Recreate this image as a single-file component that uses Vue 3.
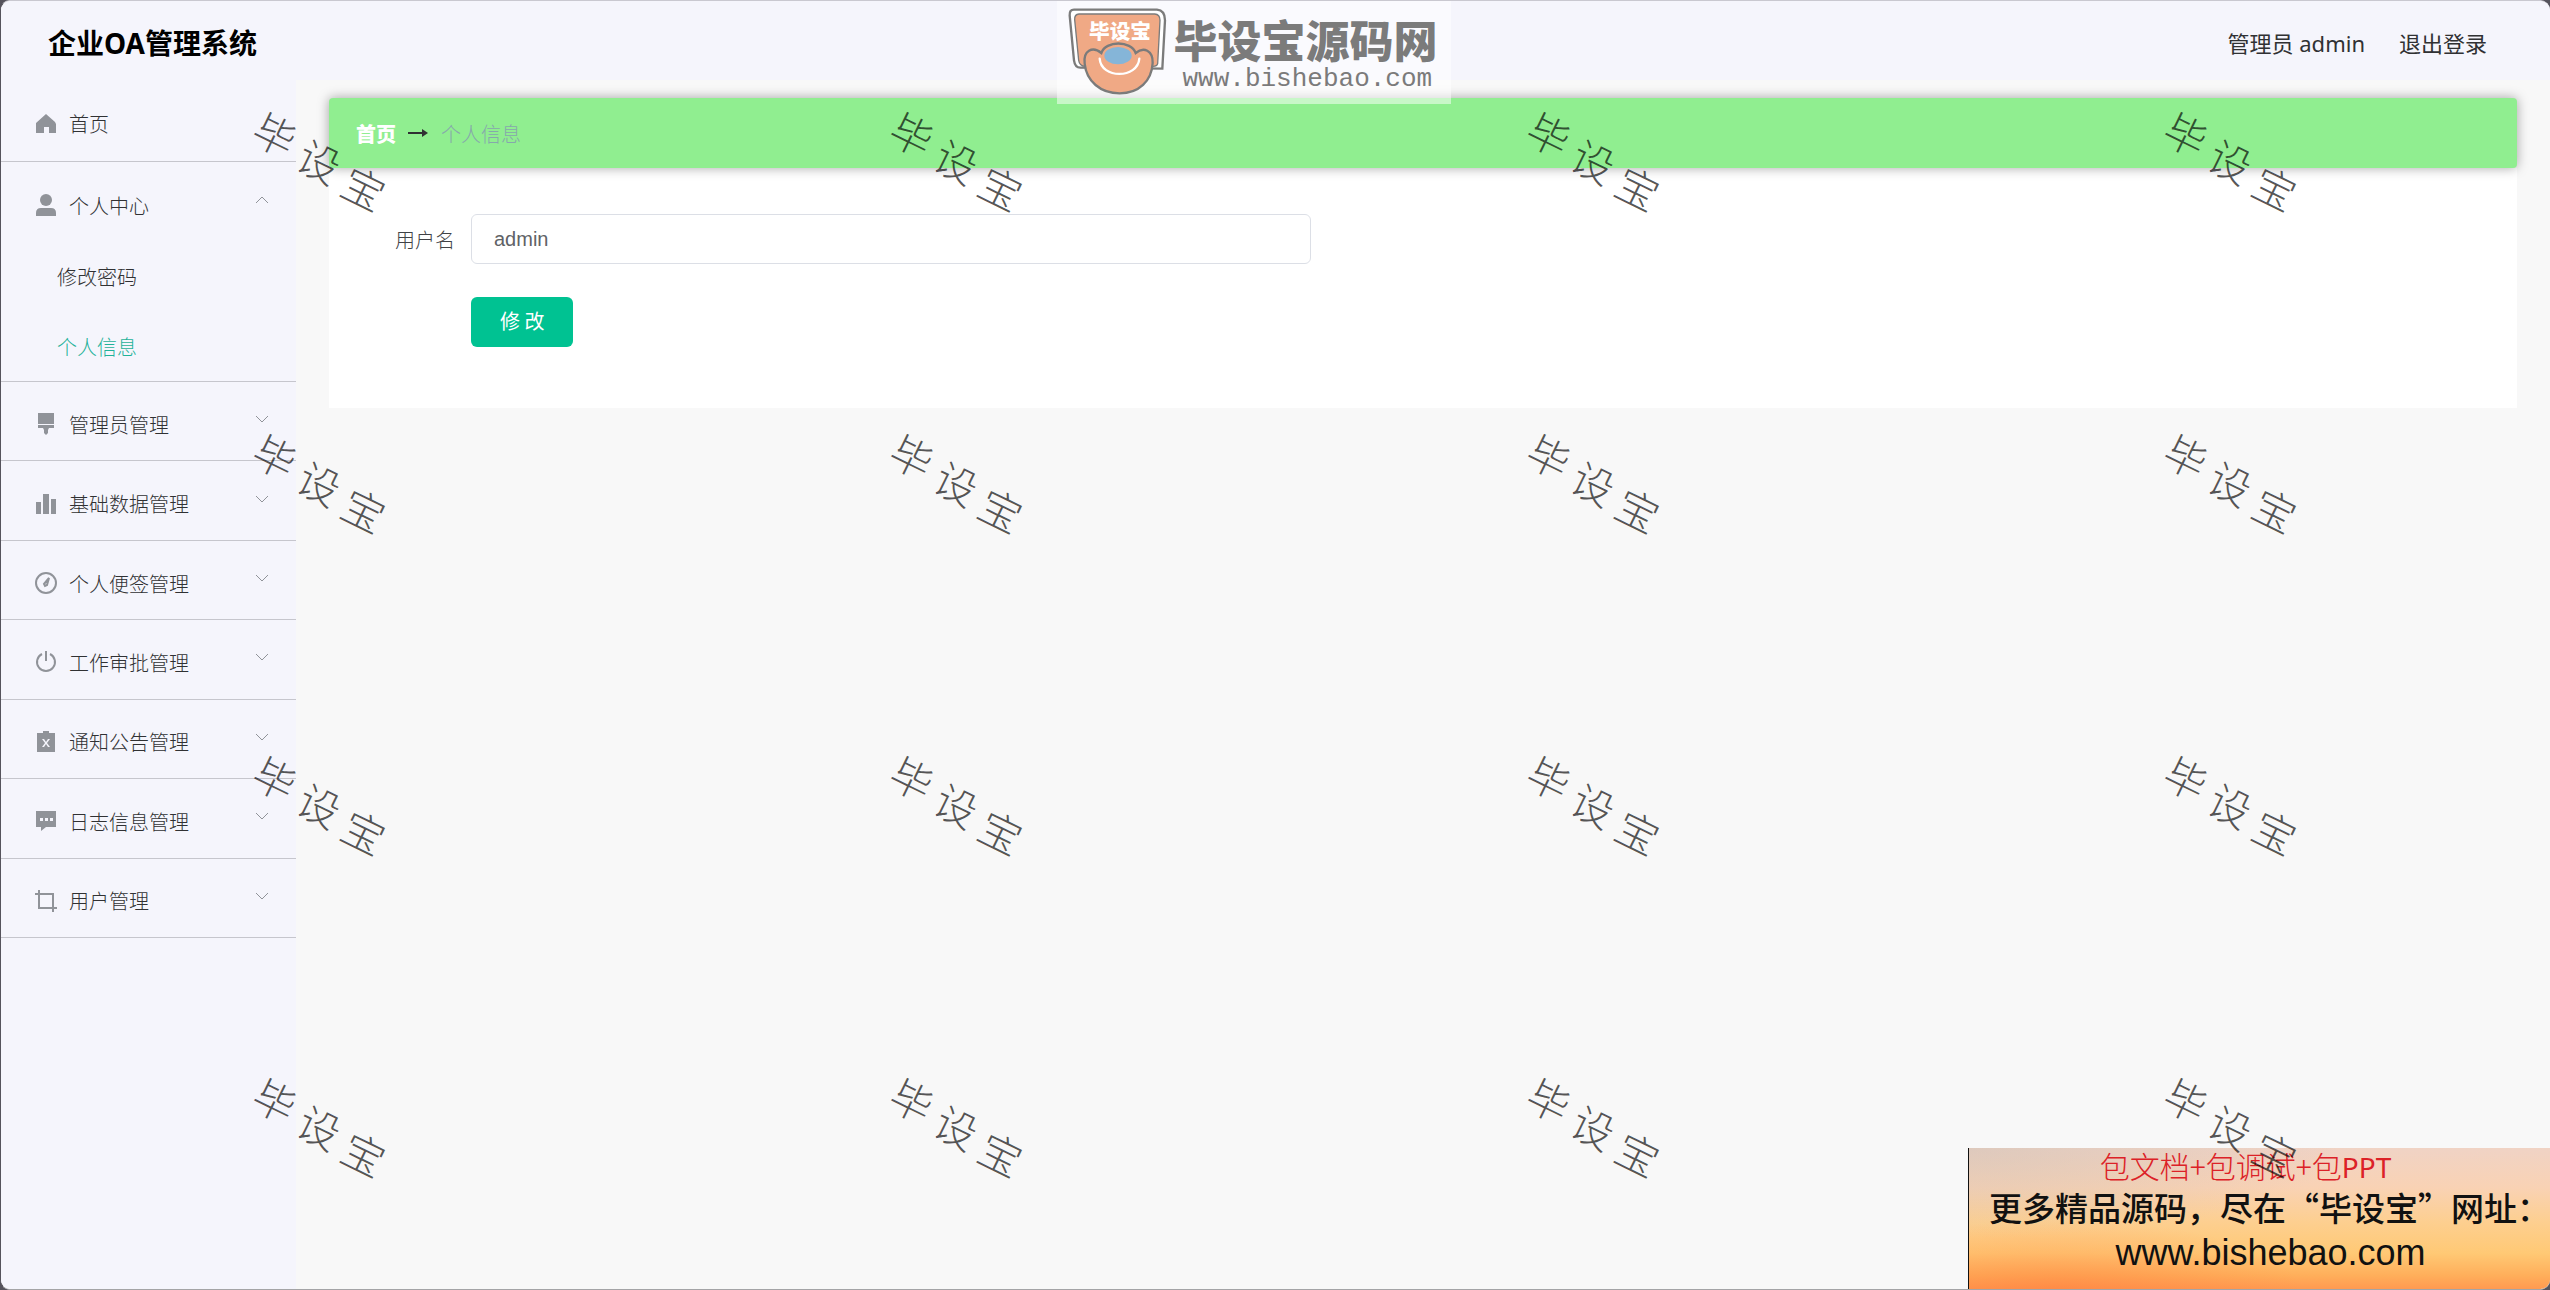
<template>
  <div class="app-shell">
    <header class="top-bar">
      <h1 class="brand">企业OA管理系统</h1>
      <div class="account">
        <span>管理员 admin</span>
        <a href="#logout">退出登录</a>
      </div>
    </header>

    <div class="body">
      <nav class="sidebar">
        <a class="menu-row home" href="#home">
          <svg class="icon" viewBox="0 0 22 22">
            <path d="M11 1 L20 9 L21 11 V20 H14 V14 H9 V20 H1 V10 Z" />
          </svg>
          <span>首页</span>
        </a>

        <div class="group opened">
          <button type="button" class="menu-row" @click="centerOpen = !centerOpen">
            <svg class="icon" viewBox="0 0 22 22">
              <circle cx="11" cy="6" r="6" />
              <path d="M1 22 V19 Q1 14 6 14 H16 Q21 14 21 19 V22 Z" />
            </svg>
            <span>个人中心</span>
            <svg class="arrow" viewBox="0 0 12 8">
              <path :d="centerOpen ? 'M0 7 L6 1 L12 7' : 'M0 1 L6 7 L12 1'" />
            </svg>
          </button>
          <template v-if="centerOpen">
            <a class="sub-row" href="#password">修改密码</a>
            <a class="sub-row active" href="#info">个人信息</a>
          </template>
        </div>

        <div class="groups">
          <button v-for="item in menus" :key="item.name" type="button" class="menu-row">
            <svg class="icon" :class="{ line: item.line }" viewBox="0 0 22 22">
              <path :d="item.path" fill-rule="evenodd" />
            </svg>
            <span>{{ item.name }}</span>
            <svg class="arrow" viewBox="0 0 12 8">
              <path d="M0 1 L6 7 L12 1" />
            </svg>
          </button>
        </div>
      </nav>

      <main class="content">
        <div class="breadcrumb">
          <a href="#home">首页</a>
          <svg class="crumb-arrow" viewBox="0 0 20 10">
            <path d="M0 5 H17" />
            <path class="head" d="M14 1 L20 5 L14 9 Z" />
          </svg>
          <span>个人信息</span>
        </div>
        <form class="card" @submit.prevent>
          <div class="form-item">
            <label for="username">用户名</label>
            <input id="username" v-model="username" type="text" />
          </div>
          <div class="form-item">
            <button type="submit" class="submit">修 改</button>
          </div>
        </form>
      </main>
    </div>

    <div class="watermarks">
      <div v-for="n in 16" :key="n" class="mark">
        <p><span>毕</span><span>设</span><span>宝</span></p>
      </div>
    </div>

    <div class="logo">
      <svg class="mascot" viewBox="80 20 300 270">
        <path class="outer" d="M101 28 H350 Q374 30 374 60 L366 205 L120 202 Q104 202 101 180 L88 45 Q87 28 101 28 Z" />
        <path class="face" d="M116 41 H343 Q359 42 359 60 L352 190 Q350 198 338 198 L135 198 Q118 198 115 180 L103 58 Q102 42 116 41 Z" />
        <path class="body-shape" d="M183 158 C196 120 272 120 286 158 C310 138 338 150 337 188 C334 242 296 279 238 279 C180 279 138 242 133 190 C128 152 156 136 183 158 Z" />
        <ellipse cx="233" cy="166" rx="41" ry="26" fill="#85b5d8" />
        <path class="smile" d="M178 175 C182 236 292 236 297 175" />
        <text x="146" y="115">毕设宝</text>
      </svg>
      <div class="logo-text">
        <strong>毕设宝源码网</strong>
        <span>www.bishebao.com</span>
      </div>
    </div>

    <aside class="promo">
      <p class="promo-red">包文档+包调试+包<b>PPT</b></p>
      <p class="promo-more">更多精品源码，尽在“毕设宝”网址：</p>
      <p class="promo-url">www.bishebao.com</p>
    </aside>
  </div>
</template>

<script setup>
import { ref } from "vue";

const username = ref("admin");
const centerOpen = ref(true);

const menus = [
  {
    name: "管理员管理",
    path: "M3 0 H19 V11 H3 Z M3 12 H19 V15 H14 L13 17 V20 L11 22 L9 20 V17 L8 15 H3 Z",
  },
  {
    name: "基础数据管理",
    path: "M1 9 H6 V21 H1 Z M8 1 H14 V21 H8 Z M16 6 H21 V21 H16 Z",
  },
  {
    name: "个人便签管理",
    line: true,
    path: "M11 1 A10 10 0 1 1 11 21 A10 10 0 1 1 11 1 Z M14 6 L9 12 L10 14 L12 13 Z",
  },
  {
    name: "工作审批管理",
    line: true,
    path: "M11 0 V10 M7 3 A9 9 0 1 0 15 3",
  },
  {
    name: "通知公告管理",
    path: "M8 0 H14 V2 H20 V21 H2 V2 H8 Z M7 8 L10 12 L7 16 H9 L11 13 L13 16 H15 L12 12 L15 8 H13 L11 11 L9 8 Z",
  },
  {
    name: "日志信息管理",
    path: "M1 1 H21 V17 H11 L6 21 V17 H1 Z M5 8 V11 H8 V8 Z M10 8 V11 H13 V8 Z M15 8 V11 H18 V8 Z",
  },
  {
    name: "用户管理",
    line: true,
    path: "M0 4 H18 V22 M4 0 V18 H22",
  },
];
</script>

<style>
html,
body {
  margin: 0;
  background: #55535c;
}
</style>

<style scoped>
.app-shell {
  position: relative;
  display: flex;
  flex-direction: column;
  min-height: 100vh;
  box-sizing: border-box;
  overflow: hidden;
  border-top: 1px solid #c9c8d0;
  border-bottom: 1px solid #a4a4a6;
  border-left: 1px solid #55535c;
  border-radius: 10px;
  background: #f8f8f8;
  color: #303133;
  font-family: "Noto Sans", "Noto Sans CJK SC", sans-serif;
  font-size: 20px;
}
a {
  color: inherit;
  text-decoration: none;
}
p {
  margin: 0;
}
.top-bar {
  display: flex;
  align-items: center;
  justify-content: space-between;
  height: 79px;
  padding: 0 63px 0 47px;
  box-sizing: border-box;
  background: #f5f5fc;
}
.brand {
  margin: 0;
  padding-top: 4px;
  color: #000;
  font-size: 28px;
  line-height: 40px;
}
.account {
  display: flex;
  gap: 34px;
  padding-top: 2px;
  font-size: 22px;
}
.body {
  display: flex;
  flex: 1;
}
.sidebar {
  flex: none;
  width: 295px;
  background: #f5f5fc;
}
.menu-row {
  display: flex;
  align-items: center;
  width: 100%;
  height: 80px;
  padding: 6px 28px 0 34px;
  box-sizing: border-box;
  border: none;
  background: none;
  color: #303133;
  font-family: "Noto Sans CJK SC", sans-serif;
  font-size: 20px;
  font-weight: 300;
  text-align: left;
  cursor: pointer;
}
.home {
  height: 82px;
  border-bottom: 1px solid #c6c6cd;
}
.opened {
  border-bottom: 1px solid #c6c6cd;
}
.groups {
  display: grid;
  grid-auto-rows: 1fr;
  min-height: 556px;
}
.groups .menu-row {
  height: auto;
  border-bottom: 1px solid #c6c6cd;
}
.icon {
  width: 22px;
  height: 22px;
  margin-right: 12px;
  fill: #909399;
}
.icon.line {
  overflow: visible;
  fill: none;
  stroke: #909399;
  stroke-width: 2;
}
.arrow {
  width: 12px;
  height: 8px;
  margin: 0 0 10px auto;
  overflow: visible;
  fill: none;
  stroke: #909399;
  stroke-width: 1;
}
.sub-row {
  display: block;
  height: 70px;
  padding-left: 56px;
  color: #303133;
  font-family: "Noto Sans CJK SC", sans-serif;
  font-weight: 300;
  line-height: 70px;
}
.sub-row:last-child {
  height: 69px;
}
.sub-row.active {
  color: #1fb299;
}
.content {
  flex: 1;
  padding: 18px 33px 40px;
  font-family: "Noto Sans CJK SC", sans-serif;
}
.breadcrumb {
  position: relative;
  display: flex;
  align-items: center;
  height: 70px;
  padding: 0 27px;
  border-radius: 4px;
  background: #90ee90;
  box-shadow: 0 0 12px rgba(0, 0, 0, 0.35);
}
.breadcrumb a {
  color: #fff;
  font-weight: 900;
}
.breadcrumb span {
  color: #86a8ac;
  font-weight: 300;
}
.crumb-arrow {
  width: 20px;
  height: 10px;
  margin: 0 13px 0 12px;
  stroke: #303133;
  stroke-width: 2;
}
.crumb-arrow .head {
  fill: #303133;
  stroke: none;
}
.card {
  padding: 46px 40px 61px;
  background: #fff;
}
.form-item {
  display: flex;
  align-items: center;
}
.form-item + .form-item {
  padding: 33px 0 0 102px;
}
.form-item label {
  width: 86px;
  padding-right: 16px;
  color: #404246;
  font-weight: 300;
  text-align: right;
}
.form-item input {
  width: 840px;
  height: 50px;
  padding: 0 22px;
  box-sizing: border-box;
  border: 1px solid #dcdfe6;
  border-radius: 6px;
  color: #606266;
  font-family: "Liberation Sans", Arial, sans-serif;
  font-size: 20px;
}
.submit {
  height: 50px;
  padding: 0 29px 4px;
  border: none;
  border-radius: 6px;
  background: #00c292;
  color: #fff;
  font-family: "Noto Sans CJK SC", sans-serif;
  font-size: 20px;
  cursor: pointer;
}

/* overlays */
.watermarks {
  position: absolute;
  inset: 0;
  display: grid;
  grid-template-columns: repeat(4, 1fr);
  grid-template-rows: repeat(4, 1fr);
  z-index: 3;
  pointer-events: none;
}
.mark {
  display: flex;
  align-items: center;
  justify-content: center;
  padding-bottom: 4px;
}
.mark p {
  display: flex;
  gap: 10px;
  color: rgba(0, 0, 0, 0.68);
  font-family: "Noto Sans CJK SC", sans-serif;
  font-size: 42px;
  font-weight: 300;
  line-height: 50px;
  transform: rotate(31deg);
}
.mark span {
  transform: rotate(-5deg);
}
.logo {
  position: absolute;
  top: 0;
  left: calc(50% - 219px);
  z-index: 4;
  display: flex;
  width: 394px;
  height: 103px;
  padding: 6px 0 0 10px;
  box-sizing: border-box;
  background: rgba(255, 255, 255, 0.5);
}
.mascot {
  width: 100px;
  height: 90px;
}
.mascot path {
  stroke: #7b7b7b;
  stroke-width: 7;
}
.mascot .outer {
  fill: #fff;
}
.mascot .face {
  fill: #f0a985;
  stroke-width: 4;
}
.mascot .body-shape {
  fill: #f0a985;
}
.mascot .smile {
  fill: none;
  stroke: #fff;
  stroke-linecap: round;
}
.mascot text {
  fill: #fff;
  font-family: "Noto Sans CJK SC", sans-serif;
  font-size: 62px;
  font-weight: 900;
}
.logo-text {
  display: flex;
  flex-direction: column;
  gap: 2px;
  padding: 8px 0 0 7px;
  color: #7b7b7b;
}
.logo-text strong {
  font-family: "Noto Sans CJK SC", sans-serif;
  font-size: 44px;
  font-weight: 900;
  line-height: 48px;
}
.logo-text span {
  padding-left: 9px;
  font-family: "Liberation Mono", monospace;
  font-size: 26px;
  line-height: 28px;
}
.promo {
  position: absolute;
  right: 0;
  bottom: -1px;
  z-index: 2;
  width: 582px;
  height: 142px;
  box-sizing: border-box;
  border-left: 1px solid #111;
  background:
    radial-gradient(ellipse at 0% 0%, rgba(200, 190, 180, 0.45), transparent 45%),
    radial-gradient(ellipse at 15% 100%, rgba(255, 110, 50, 0.35), transparent 35%),
    linear-gradient(#f0d3c5 0%, #f9d2b4 28%, #fdcf90 52%, #ffc975 74%, #ffae5a 90%, #ff9850 100%);
  color: #111;
  text-align: center;
  font-family: "Noto Sans CJK SC", sans-serif;
  white-space: nowrap;
}
.promo-red {
  padding-right: 28px;
  color: #dc2127;
  font-size: 30px;
  font-weight: 300;
  line-height: 34px;
}
.promo-red b {
  font-family: "Noto Sans", sans-serif;
  font-size: 28px;
  font-weight: 400;
}
.promo-more {
  padding-left: 20px;
  font-size: 33px;
  font-weight: 500;
  line-height: 46px;
  text-align: left;
}
.promo-url {
  padding-left: 22px;
  font-family: "Liberation Sans", Arial, sans-serif;
  font-size: 36px;
  line-height: 46px;
}
</style>
